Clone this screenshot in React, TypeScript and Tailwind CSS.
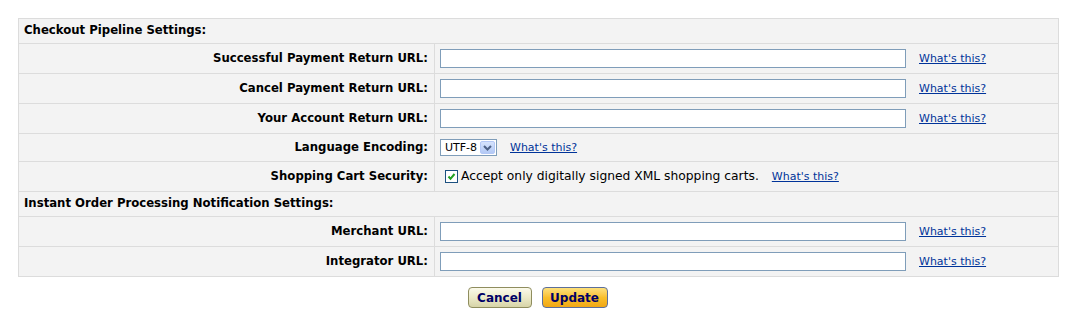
import React from "react";

const font = { fontFamily: '"DejaVu Sans", Verdana, sans-serif' };

function Link() {
  return (
    <a href="#" className="text-[11px] leading-none text-[#003399] underline ml-[13px] whitespace-nowrap">
      What's this?
    </a>
  );
}

function UrlInput() {
  return (
    <input
      type="text"
      className="w-[466px] h-[19px] bg-white border border-[#7f9db9] outline-none px-1 text-[12px]"
    />
  );
}

function Row({
  label,
  h = "h-[30px]",
  last = false,
  children,
}: {
  label: string;
  h?: string;
  last?: boolean;
  children: React.ReactNode;
}) {
  return (
    <div className={`flex ${h} ${last ? "" : "border-b border-[#dcdcdc]"}`}>
      <div className="w-[416px] border-r border-[#dcdcdc] flex items-center justify-end pr-[6px] text-[11.7px] font-bold text-black whitespace-nowrap">
        {label}
      </div>
      <div className="flex-1 flex items-center pl-[5px]">{children}</div>
    </div>
  );
}

function Header({ text }: { text: string }) {
  return (
    <div className="h-[25px] border-b border-[#dcdcdc] flex items-center pl-[5px] text-[11.7px] font-bold text-black">
      {text}
    </div>
  );
}

export default function App() {
  return (
    <div className="w-[1078px] h-[327px] bg-white pt-[18px]" style={font}>
      <div className="ml-[18px] w-[1041px] border border-[#dcdcdc] bg-[#f3f3f3]">
        <Header text="Checkout Pipeline Settings:" />
        <Row label="Successful Payment Return URL:">
          <UrlInput />
          <Link />
        </Row>
        <Row label="Cancel Payment Return URL:">
          <UrlInput />
          <Link />
        </Row>
        <Row label="Your Account Return URL:">
          <UrlInput />
          <Link />
        </Row>
        <Row label="Language Encoding:" h="h-[28px]">
          <div className="w-[57px] h-[17px] bg-white border border-[#7f9db9] flex items-center justify-between pl-[4px] pr-[1px]">
            <span className="text-[11px] leading-none text-black">UTF-8</span>
            <span className="w-[15px] h-[13px] rounded-[2px] bg-gradient-to-b from-[#d6e3fc] to-[#b3c9f5] border border-[#b4c8f6] flex items-center justify-center">
              <svg width="9" height="6" viewBox="0 0 9 6">
                <path d="M1 1 L4.5 4.5 L8 1" stroke="#4d6185" strokeWidth="2" fill="none" />
              </svg>
            </span>
          </div>
          <Link />
        </Row>
        <Row label="Shopping Cart Security:">
          <span className="ml-[5px] w-[13px] h-[13px] bg-white border border-[#1c5180] flex items-center justify-center">
            <svg width="9" height="9" viewBox="0 0 9 9">
              <path d="M1.5 4.5 L3.5 6.8 L7.5 2" stroke="#21a121" strokeWidth="2" fill="none" />
            </svg>
          </span>
          <span className="ml-[3px] text-[12.3px] text-black whitespace-nowrap">
            Accept only digitally signed XML shopping carts.
          </span>
          <Link />
        </Row>
        <Header text="Instant Order Processing Notification Settings:" />
        <Row label="Merchant URL:">
          <UrlInput />
          <Link />
        </Row>
        <Row label="Integrator URL:" h="h-[29px]" last>
          <UrlInput />
          <Link />
        </Row>
      </div>
      <div className="flex justify-center gap-[10px] mt-[10px] mr-[3px]">
        <button className="w-[64px] h-[21px] rounded-[4px] border border-[#8f8d5e] bg-gradient-to-b from-[#fbfaeb] via-[#eceac9] to-[#d7d4a8] text-[12px] font-bold text-[#000066] leading-none">
          Cancel
        </button>
        <button className="w-[66px] h-[21px] rounded-[4px] border border-[#5d6f9a] bg-gradient-to-b from-[#fde07a] via-[#f9bf2a] to-[#f1a714] text-[12px] font-bold text-[#000066] leading-none">
          Update
        </button>
      </div>
    </div>
  );
}
